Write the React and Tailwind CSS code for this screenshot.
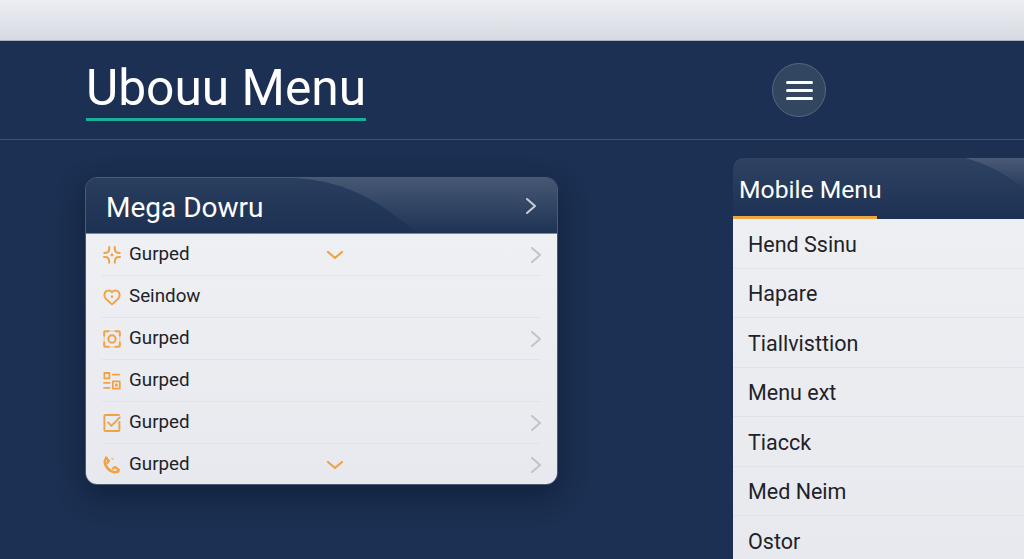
import React from 'react'

const orange = '#f0a244'

function Burst(){
  return (
    <svg width="18" height="18" viewBox="0 0 18 18" fill="none" stroke={orange} strokeWidth="2" strokeLinecap="round" strokeLinejoin="round">
      <path d="M6.2 1c.3 2.6-.2 4-1.2 4.9-.9.8-2 1-3.8 1" />
      <path d="M11.8 1c-.3 2.6.2 4 1.2 4.9.9.8 2 1 3.8 1" />
      <path d="M1 11c2.2-.2 3.4.2 4.2 1.1.8.9 1.1 2.3 1 4.7" />
      <path d="M17 11c-2.2-.2-3.4.2-4.2 1.1-.8.9-1.1 2.3-1 4.7" />
      <circle cx="9" cy="9" r="1.4" fill={orange} stroke="none" />
    </svg>
  )
}

function Heart(){
  return (
    <svg width="18" height="18" viewBox="0 0 18 18" fill="none" stroke={orange} strokeWidth="1.9" strokeLinecap="round" strokeLinejoin="round">
      <path d="M9 16.4 2.8 10.8C.4 8.2 1.2 3.2 4.6 2.6c1.9-.3 3.4.3 4.4 1.7 1-1.4 2.5-2 4.4-1.7 3.4.6 4.2 5.6 1.8 8.2z" />
      <circle cx="9" cy="8.8" r="1.2" fill={orange} stroke="none" />
    </svg>
  )
}

function Focus(){
  return (
    <svg width="18" height="18" viewBox="0 0 18 18" fill="none" stroke={orange} strokeWidth="2" strokeLinecap="round" strokeLinejoin="round">
      <path d="M5.5 1.2H2.2a1 1 0 0 0-1 1v3.3M12.5 1.2h3.3a1 1 0 0 1 1 1v3.3M5.5 16.8H2.2a1 1 0 0 1-1-1v-3.3M12.5 16.8h3.3a1 1 0 0 0 1-1v-3.3" />
      <path d="M5.5 1.2h7M1.2 5.5v7M16.8 5.5v7M5.5 16.8h7" strokeOpacity="0.45" strokeWidth="1.2" />
      <circle cx="9" cy="9" r="3.7" strokeWidth="2" />
    </svg>
  )
}

function Layout(){
  return (
    <svg width="18" height="18" viewBox="0 0 18 18" fill="none" stroke={orange} strokeWidth="1.8" strokeLinecap="round" strokeLinejoin="round">
      <rect x="1.4" y="1" width="5" height="5.4" />
      <path d="M9.8 2.6h6.6M1 10.8h5.6M1 15.8h5.6" />
      <rect x="9.8" y="9.4" width="7" height="7.2" />
      <rect x="12.7" y="12.2" width="1.4" height="1.8" strokeWidth="1.2" />
    </svg>
  )
}

function Check(){
  return (
    <svg width="18" height="18" viewBox="0 0 18 18" fill="none" stroke={orange} strokeWidth="1.9" strokeLinecap="round" strokeLinejoin="round">
      <path d="M16.4 8v8a1 1 0 0 1-1 1H2.4a1 1 0 0 1-1-1V2a1 1 0 0 1 1-1h13.6" />
      <path d="M5 8.4 8.4 11.8 16.8 3.4" />
    </svg>
  )
}

function Phone(){
  return (
    <svg width="18" height="18" viewBox="0 0 18 18" fill="none" stroke={orange} strokeLinecap="round" strokeLinejoin="round">
      <path d="M3.4 2.2C1.8 3.6 1.4 5.6 2.2 8c1.2 3.6 4 6.4 7.6 7.8 2 .7 3.8.5 5.2-.6" strokeWidth="2.6" />
      <path d="M3 1.4 6 5 4.2 7" strokeWidth="2.2" />
      <path d="M10 12.4 12 11 16 13.8 15 15.8" strokeWidth="2.2" />
      <path d="M8.8 2.4c.4.1.8.3 1.2.6" strokeWidth="1.4" strokeOpacity="0.7" />
    </svg>
  )
}

function Chev({ className }){
  return (
    <svg className={className} width="12" height="18" viewBox="0 0 12 18" fill="none" stroke="currentColor" strokeWidth="2" strokeLinecap="round" strokeLinejoin="round">
      <path d="M2 2l8 7-8 7" />
    </svg>
  )
}

function Down(){
  return (
    <svg width="18" height="10" viewBox="0 0 18 10" fill="none" stroke={orange} strokeWidth="2.2" strokeLinecap="round" strokeLinejoin="round">
      <path d="M2 2l7 6 7-6" />
    </svg>
  )
}

// soft light wedge across the card headers
function Gloss({ id, d, w, h }){
  return (
    <svg className="absolute inset-0 w-full h-full" preserveAspectRatio="none" viewBox={`0 0 ${w} ${h}`}>
      <defs>
        <linearGradient id={id} x1="0" y1="0" x2="0" y2="1">
          <stop offset="0" stopColor="#ffffff" stopOpacity="0.13" />
          <stop offset="1" stopColor="#ffffff" stopOpacity="0.01" />
        </linearGradient>
      </defs>
      <path d={d} fill={`url(#${id})`} />
    </svg>
  )
}

const megaItems = [
  { icon: <Burst />, label: 'Gurped', down: true, more: true },
  { icon: <Heart />, label: 'Seindow' },
  { icon: <Focus />, label: 'Gurped', more: true },
  { icon: <Layout />, label: 'Gurped' },
  { icon: <Check />, label: 'Gurped', more: true },
  { icon: <Phone />, label: 'Gurped', down: true, more: true },
]

const mobileItems = ['Hend Ssinu', 'Hapare', 'Tiallvisttion', 'Menu ext', 'Tiacck', 'Med Neim', 'Ostor']

export default function App(){
  return (
    <div className="h-[559px] overflow-hidden bg-[#1b3052] font-['Roboto',sans-serif]">
      <div className="h-[41px] border-b border-[#a9b2c2] bg-gradient-to-b from-[#eceef2] to-[#d6dae2]" />

      <header className="h-[99px] border-b border-[#3f5170] pl-[86px] flex items-start">
        <div className="w-[686px] shrink-0 pt-[17px]">
          <h1 className="w-fit text-[49.7px] leading-[60px] text-white border-b-[3px] border-[#17b09a]">Ubouu Menu</h1>
        </div>
        <button className="mt-[22px] w-[54px] h-[54px] rounded-full bg-[#33465f] border border-[#566880] flex flex-col items-center justify-center gap-[5px]">
          <span className="block w-[27px] h-[3px] rounded-full bg-white" />
          <span className="block w-[27px] h-[3px] rounded-full bg-white" />
          <span className="block w-[27px] h-[3px] rounded-full bg-white" />
        </button>
      </header>

      <main className="flex items-start pl-[85px]">
        <section className="mt-[37px] w-[473px] shrink-0 rounded-[12px] overflow-hidden border border-[#4a5b76] shadow-[0_10px_28px_rgba(6,14,30,0.45)]">
          <div className="relative h-[56px] bg-gradient-to-b from-[#2a3e5e] to-[#1c3153] border-b border-[#7b899e] flex items-center justify-between pl-[20px] pr-[20px]">
            <Gloss id="megaGloss" w={472} h={56} d="M210 0 C270 4 300 30 332 56 L472 56 L472 0 Z" />
            <span className="relative top-[2px] text-[28px] text-white">Mega Dowru</span>
            <Chev className="relative text-[#c9ced7]" />
          </div>
          <ul className="bg-gradient-to-b from-[#eef0f4] to-[#e7e9ee] px-[16px]">
            {megaItems.map((item, i) => (
              <li key={i} className="h-[42px] last:h-[40px] last:pt-[1px] grid grid-cols-[224px_1fr_auto] items-center border-b border-[#e0e3e8] last:border-b-0">
                <div className="flex items-center gap-[8px] pl-[1px]">
                  {item.icon}
                  <span className="text-[18.8px] text-[#1f2228]">{item.label}</span>
                </div>
                <div>{item.down && <Down />}</div>
                <div className="w-[12px] mr-[-1px]">{item.more && <Chev className="text-[#bfc3ca]" />}</div>
              </li>
            ))}
          </ul>
        </section>

        <section className="ml-[175px] mt-[18px] flex-1 rounded-tl-[10px] overflow-hidden">
          <div className="relative h-[61px] bg-gradient-to-b from-[#2f4262] to-[#1c3153] flex items-center pl-[6px]">
            <Gloss id="mobileGloss" w={291} h={61} d="M232 0 C255 6 272 16 291 30 L291 0 Z" />
            <span className="relative top-[1px] text-[24.7px] text-white">Mobile Menu</span>
            <span className="absolute left-0 bottom-0 w-[144px] h-[3px] bg-[#f0a545]" />
          </div>
          <ul className="bg-gradient-to-b from-[#edeff3] to-[#e7e9ee]">
            {mobileItems.map(m => (
              <li key={m} className="h-[49.5px] pt-[3px] flex items-center pl-[15px] border-b border-[#dfe2e7] text-[21.5px] text-[#1f2228]">{m}</li>
            ))}
          </ul>
        </section>
      </main>
    </div>
  )
}
